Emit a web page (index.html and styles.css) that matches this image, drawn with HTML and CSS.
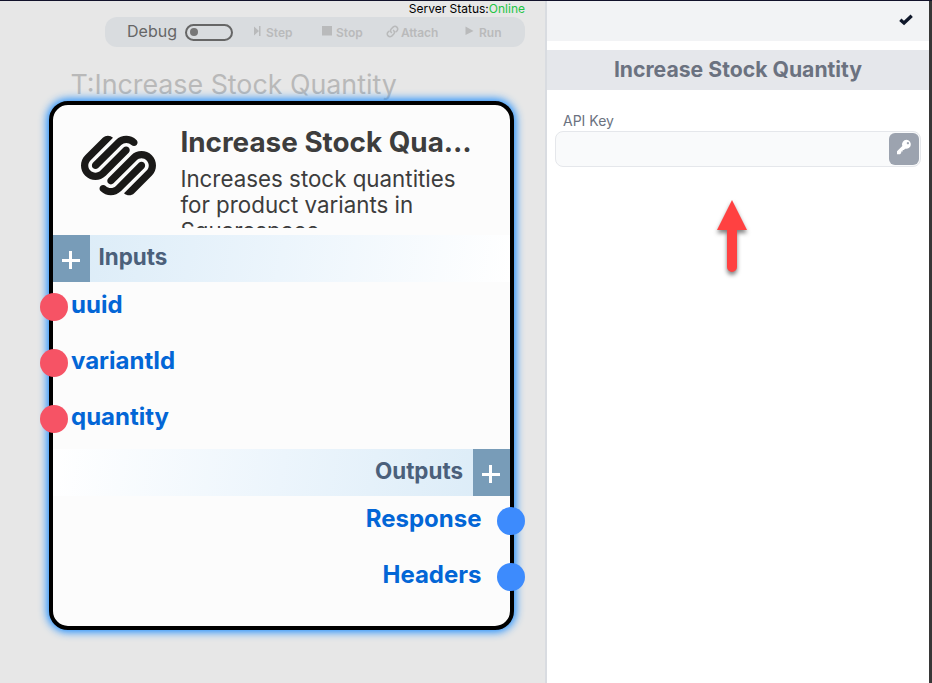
FILE: index.html
```html
<!DOCTYPE html>
<html lang="en">
<head>
<meta charset="utf-8">
<title>Increase Stock Quantity</title>
<link rel="stylesheet" href="styles.css">
</head>
<body>
<div class="app">
  <main class="canvas">
    <div class="status">Server Status:<span class="online">Online</span></div>
    <div class="toolbar">
      <span class="debug">Debug</span>
      <span class="toggle"></span>
      <span class="tool step"><svg width="8" height="10" viewBox="0 0 8 10"><path d="M0 0.5L5 5L0 9.5zM5 0h1.5v10H5z"/></svg>Step</span>
      <span class="tool stop"><svg width="10" height="10" viewBox="0 0 10 10"><path d="M0 0h10v9.5H0z"/></svg>Stop</span>
      <span class="tool attach"><svg width="13" height="13" viewBox="0 0 24 24"><g fill="none" stroke="currentColor" stroke-width="2.8" stroke-linecap="round"><path d="M10 14a5 5 0 0 1 0-7l3.500-3.500a5 5 0 0 1 7 7L18.500 12.500"/><path d="M14 10a5 5 0 0 1 0 7l-3.500 3.500a5 5 0 0 1-7-7L5.500 11.500"/></g></svg>Attach</span>
      <span class="tool run"><svg width="9" height="10" viewBox="0 0 9 10"><path d="M0.500 0.500L8.500 5L0.500 9z"/></svg>Run</span>
    </div>
    <div class="trigger">T:Increase Stock Quantity</div>
    <section class="node">
      <header class="head">
        <svg class="logo" width="75" height="75" viewBox="0 0 24 24"><path d="M22.655 8.719c-1.802-1.801-4.726-1.801-6.564 0l-7.351 7.35c-.45.45-.45 1.2 0 1.65.45.449 1.2.449 1.65 0l7.351-7.351c.899-.899 2.362-.899 3.264 0 .9.9.9 2.364 0 3.264l-7.239 7.239c.9.899 2.362.899 3.263 0l5.589-5.589c1.836-1.838 1.836-4.763.037-6.563zm-2.475 2.437c-.451-.45-1.201-.45-1.65 0l-7.354 7.389c-.9.9-2.361.9-3.262 0-.45-.45-1.201-.45-1.651 0-.45.45-.45 1.2 0 1.649 1.801 1.801 4.726 1.801 6.564 0l7.351-7.35c.449-.487.449-1.239.002-1.688zm-2.439-7.35c-1.801-1.801-4.726-1.801-6.564 0l-7.351 7.351c-.45.449-.45 1.199 0 1.649s1.2.45 1.650 0l7.395-7.351c.9-.899 2.371-.899 3.270 0 .451.45 1.201.45 1.650 0 .421-.487.421-1.199-.029-1.649zm-2.475 2.437c-.45-.45-1.2-.45-1.650 0l-7.351 7.389c-.899.9-2.363.9-3.265 0-.9-.899-.9-2.363 0-3.264l7.239-7.239c-.9-.9-2.362-.9-3.263 0L1.350 8.719c-1.800 1.800-1.800 4.725 0 6.563 1.801 1.801 4.725 1.801 6.564 0l7.350-7.351c.451-.488.451-1.238 0-1.688z"/></svg>
        <div class="about">
          <h1>Increase Stock Qua…</h1>
          <p>Increases stock quantities for product variants in Squarespace</p>
        </div>
      </header>
      <div class="bar inputs"><button class="add"></button><span>Inputs</span></div>
      <ul class="ports in">
        <li>uuid</li>
        <li>variantId</li>
        <li>quantity</li>
      </ul>
      <div class="bar outputs"><span>Outputs</span><button class="add"></button></div>
      <ul class="ports out">
        <li>Response</li>
        <li>Headers</li>
      </ul>
    </section>
  </main>
  <aside class="panel">
    <div class="panel-top"><svg width="14" height="12" viewBox="0 0 14 12"><path d="M1.300 5.800L5 9L12.700 1.700" fill="none" stroke="#0f172a" stroke-width="3.300"/></svg></div>
    <h2>Increase Stock Quantity</h2>
    <label>API Key</label>
    <div class="field">
      <button class="key"><svg width="16" height="16" viewBox="0 0 16 16"><path fill="#fff" fill-rule="evenodd" d="M10.500 0.800a4.500 4.500 0 1 1-1.300 8.850L7.900 11H6.700v1.500H5.200V14L4 15.200H1V12.300L6.300 7A4.700 4.700 0 0 1 10.500 0.800zM11.900 3a1.150 1.150 0 1 0 .01 0z"/></svg></button>
    </div>
    <svg class="arrow" width="50" height="90" viewBox="0 0 50 90"><path d="M25 10L40 40H30V77a5 5 0 0 1-10 0V40H10z" fill="#ff4141"/></svg>
  </aside>
</div>
</body>
</html>
```

FILE: styles.css
```css
* { box-sizing: border-box; }
body { margin: 0; font-family: Inter, "Liberation Sans", sans-serif; overflow: hidden; }
h1, h2, p, ul { margin: 0; padding: 0; }
ul { list-style: none; }
button { border: 0; padding: 0; }
.app { display: flex; width: 932px; height: 683px; border-top: 1px solid #12122b; }
.canvas { position: relative; width: 547px; background: #e7e7e7; border-right: 2px solid #d9dce1; }
.status { height: 16px; padding-right: 20px; text-align: right; font-size: 12px; line-height: 16px; color: #000; white-space: nowrap; }
.online { color: #22c544; }
.toolbar { display: flex; align-items: center; width: 420px; height: 30px; margin-left: 105px; padding-left: 22px; border-radius: 12px; background: #d9dcdf; color: #b9babb; }
.debug { width: 58px; margin-top: -2px; font-size: 16px; color: #666; }
.toggle { width: 48px; height: 17px; border: 2px solid #666; border-radius: 9px; padding: 2px 3px; }
.toggle::before { content: ""; display: block; width: 8px; height: 8px; border-radius: 50%; background: #777; }
.tool { display: flex; align-items: center; font-size: 12px; font-weight: 600; gap: 4px; white-space: nowrap; }
.tool svg { fill: currentColor; margin-top: -2px; }
.step { margin-left: 21px; width: 68px; }
.stop { width: 64px; }
.attach { width: 79px; gap: 2px; letter-spacing: -0.1px; }
.run { gap: 5px; }
.trigger { margin: 18px 0 0 70.500px; font-size: 26.800px; line-height: 38px; color: #b9b9b9; white-space: nowrap; }
.node { position: absolute; left: 49px; top: 100px; width: 465px; height: 529px; border: 4px solid #000; border-radius: 19px; background: #fcfcfc; box-shadow: 0 0 8px 2px #1a8cff; }
.head { display: flex; height: 130px; padding: 23px 0 0 28px; }
.logo { flex: none; margin: 0 24.400px 0 0; fill: #1a1918; }
.about { width: 300px; height: 100px; overflow: hidden; color: #3d3d3d; }
.about h1 { margin-top: -3px; font-size: 27.850px; line-height: 34px; font-weight: 700; white-space: nowrap; }
.about p { margin-top: 7px; font-size: 22.350px; line-height: 26px; }
.bar { display: flex; height: 47px; font-size: 22.400px; font-weight: 700; line-height: 44px; color: #4b607b; }
.inputs { background: linear-gradient(100deg, #daebf7, #ecf5fc 50%, #fff); }
.outputs { justify-content: flex-end; background: linear-gradient(-80deg, #daebf7, #ecf5fc 50%, #fff); }
.inputs span { margin-left: 8.500px; }
.outputs span { margin-right: 10px; }
.add { width: 37px; height: 47px; background: linear-gradient(#fff, #fff) 9px 24px / 18px 3px no-repeat, linear-gradient(#fff, #fff) 16px 16px / 3px 18px no-repeat, #789cb8; }
.ports { font-size: 24px; font-weight: 700; color: #0366d6; }
.ports li { position: relative; height: 56px; line-height: 46px; }
.ports li::before { content: ""; position: absolute; top: 10.500px; width: 28px; height: 28px; border-radius: 50%; }
.in { height: 167px; padding-left: 18px; }
.in li::before { left: -31.500px; background: #f65365; }
.out { padding-right: 28.500px; text-align: right; }
.out li::before { right: -43.500px; background: #3d8bfd; }
.panel { width: 385px; background: #fff; border-right: 3px solid #373737; }
.panel-top { display: flex; justify-content: flex-end; height: 40px; padding: 13px 16px 0 0; background: #f2f3f5; }
.panel h2 { height: 40px; margin-top: 9px; background: #e5e7eb; text-align: center; font-size: 21.200px; line-height: 39px; font-weight: 700; color: #6b7280; }
.panel label { display: block; margin: 22px 0 0 16px; font-size: 14px; line-height: 18px; color: #6b7280; }
.field { display: flex; justify-content: flex-end; width: 366px; height: 36px; margin: 1px 0 0 8px; padding: 1px; border: 1px solid #e5e7eb; border-radius: 8px; background: #f9fafb; }
.key { display: flex; justify-content: center; width: 30px; height: 32px; padding-top: 6px; border-radius: 6px; background: #9ca3af; }
.arrow { display: block; margin: 23px 0 0 160px; filter: drop-shadow(0 3px 2px rgba(0,0,0,.5)); }
```
